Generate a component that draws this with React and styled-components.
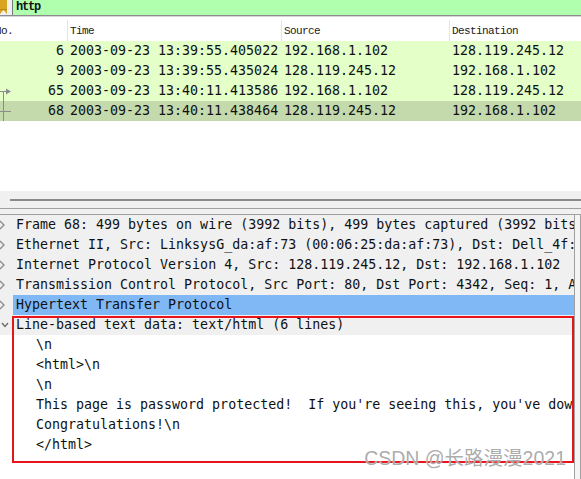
import React from 'react';
import styled, { createGlobalStyle } from 'styled-components';

const GlobalStyle = createGlobalStyle`
	html, body {
		margin: 0;
		padding: 0;
		background: #ffffff;
		overflow: hidden;
	}
	#root {
		width: 581px;
		height: 479px;
	}
`;

const MONO = `'DejaVu Sans Mono', 'Liberation Mono', monospace`;
const SMALL = `'Liberation Mono', monospace`;

const Window = styled.div`
	position: relative;
	width: 581px;
	height: 479px;
	display: flex;
	flex-direction: column;
	background: #ffffff;
	overflow: hidden;
	font-family: ${MONO};
	color: #101010;
`;

const FilterBar = styled.div`
	display: flex;
	height: 15px;
	background: #f0f0f0;
	border-bottom: 1px solid #8c8c8c;
	box-shadow: 0 1px 0 #d4d4d4;
`;

const BookmarkIcon = styled.div`
	width: 12px;
	display: flex;
	align-items: flex-start;
`;

const FilterInput = styled.div`
	flex: 1;
	background: #afffaf;
	border-left: 1px solid #7a7a7a;
	padding-left: 3px;
	font-family: ${SMALL};
	font-size: 12px;
	font-weight: bold;
	line-height: 15px;
	letter-spacing: -1.2px;
`;

const ListHeader = styled.div`
	display: grid;
	grid-template-columns: 67px 214px 168px 1fr;
	height: 21px;
	margin-top: 4px;
	background: #ffffff;
`;

const HeaderCell = styled.div`
	border-left: ${(p) => (p.$first ? 'none' : '1px solid #e4e4e4')};
	padding-left: ${(p) => (p.$first ? '0' : '2px')};
	margin-left: ${(p) => (p.$first ? '-5px' : '0')};
	font-family: ${SMALL};
	font-size: 11px;
	letter-spacing: -0.6px;
	line-height: 23px;
	color: #202020;
`;

const PacketList = styled.div`
	flex: 0 0 auto;
	height: 70px;
`;

const PacketRow = styled.div`
	display: grid;
	grid-template-columns: 67px 214px 168px 1fr;
	height: 20px;
	background: ${(p) => (p.$selected ? '#c4daac' : '#e4ffc7')};
	font-size: 13.3px;
	line-height: 20px;
	position: relative;
`;

const Cell = styled.div`
	white-space: nowrap;
	overflow: hidden;
	padding-left: ${(p) => (p.$right ? '0' : '3px')};
	padding-right: ${(p) => (p.$right ? '3px' : '0')};
	text-align: ${(p) => (p.$right ? 'right' : 'left')};
`;

const RelatedMark = styled.svg`
	position: absolute;
	left: 0;
	top: 0;
`;

const Splitter = styled.div`
	height: 17px;
	background: #f0f0f0;
	display: flex;
	flex-direction: column;
	justify-content: flex-start;
	border-bottom: 1px solid #a0a0a0;
`;

const Grip = styled.div`
	margin: 8px 0 0 10px;
	height: 2px;
	background: #8a8a8a;
`;

const Gap = styled.div`
	height: 5px;
	background: #f0f0f0;
`;

const DetailArea = styled.div`
	flex: 1;
	display: flex;
	border-top: 1px solid #a0a0a0;
`;

const DetailPane = styled.div`
	width: 574px;
	border-right: 1px solid #a0a0a0;
	display: flex;
	flex-direction: column;
	background: #ffffff;
	overflow: hidden;
`;

const SideStrip = styled.div`
	flex: 1;
	background: #f4f4f4;
	border-right: 1px solid #a0a0a0;
`;

const TreeRow = styled.div`
	display: flex;
	height: 20px;
	background: ${(p) => (p.$plain ? '#ffffff' : '#f0f0f0')};
	font-size: 13.3px;
	line-height: 20px;
	white-space: pre;
`;

const Toggle = styled.div`
	width: 13px;
	flex: 0 0 13px;
	display: flex;
	align-items: center;
`;

const TreeText = styled.div`
	flex: 1;
	padding-left: ${(p) => 3 + (p.$depth || 0) * 20}px;
	background: ${(p) => (p.$selected ? '#80b8f5' : 'transparent')};
	overflow: hidden;
`;

const Annotated = styled.div`
	position: relative;
	&::after {
		content: '';
		position: absolute;
		left: 12px;
		top: 1px;
		width: 558px;
		height: 143px;
		border: 2px solid #e8141c;
		pointer-events: none;
	}
`;

const Watermark = styled.div`
	position: absolute;
	right: 15px;
	bottom: 8px;
	font-family: 'Liberation Sans', 'Noto Sans CJK SC', sans-serif;
	font-size: 19.5px;
	color: rgba(150, 150, 150, 0.8);
	text-shadow: 0 0 1px rgba(255, 255, 255, 0.9);
	white-space: nowrap;
`;

const packets = [
	{ no: 6, time: '2003-09-23 13:39:55.405022', src: '192.168.1.102', dst: '128.119.245.12' },
	{ no: 9, time: '2003-09-23 13:39:55.435024', src: '128.119.245.12', dst: '192.168.1.102' },
	{ no: 65, time: '2003-09-23 13:40:11.413586', src: '192.168.1.102', dst: '128.119.245.12', mark: 'arrow' },
	{ no: 68, time: '2003-09-23 13:40:11.438464', src: '128.119.245.12', dst: '192.168.1.102', mark: 'end', selected: true },
];

const tree = [
	'Frame 68: 499 bytes on wire (3992 bits), 499 bytes captured (3992 bits) on interface 0',
	'Ethernet II, Src: LinksysG_da:af:73 (00:06:25:da:af:73), Dst: Dell_4f:36:23 (00:08:74:4f:36:23)',
	'Internet Protocol Version 4, Src: 128.119.245.12, Dst: 192.168.1.102',
	'Transmission Control Protocol, Src Port: 80, Dst Port: 4342, Seq: 1, Ack: 430, Len: 445',
];

const htmlLines = [
	'\\n',
	'<html>\\n',
	'\\n',
	"This page is password protected!  If you're seeing this, you've downloaded the page correctly.\\n",
	'Congratulations!\\n',
	'</html>',
];

const Chevron = ({ open }) => (
	<svg width="8" height="10" viewBox="0 0 8 10" style={{ marginLeft: open ? 1 : -2 }}>
		{open ? (
			<polyline points="1,3 4,6.5 7,3" fill="none" stroke="#6a6a6a" strokeWidth="1.3" />
		) : (
			<polyline points="2,1 6,5 2,9" fill="none" stroke="#8a8a8a" strokeWidth="1.3" />
		)}
	</svg>
);

const Mark = ({ kind }) => (
	<RelatedMark width="14" height="20" viewBox="0 0 14 20">
		{kind === 'arrow' ? (
			<>
				<line x1="3.5" y1="10" x2="3.5" y2="20" stroke="#8c8c8c" strokeWidth="1" />
				<line x1="0" y1="10.5" x2="7" y2="10.5" stroke="#8c8c8c" strokeWidth="1" />
				<polygon points="6,7.5 11,10.5 6,13.5" fill="#8c8c8c" />
			</>
		) : (
			<>
				<line x1="3.5" y1="0" x2="3.5" y2="20" stroke="#8c8c8c" strokeWidth="1" />
				<line x1="0" y1="10.5" x2="11" y2="10.5" stroke="#8c8c8c" strokeWidth="1" />
			</>
		)}
	</RelatedMark>
);

const App = () => (
	<Window>
		<GlobalStyle />
		<FilterBar>
			<BookmarkIcon>
				<svg width="8" height="15" viewBox="0 0 8 15">
					<rect x="0" y="0" width="7" height="14" fill="#d9a521" />
					<polygon points="0,14 3.5,10 7,14" fill="#f0f0f0" />
					<rect x="0" y="9" width="7" height="1" fill="#b8861a" />
				</svg>
			</BookmarkIcon>
			<FilterInput>http</FilterInput>
		</FilterBar>
		<ListHeader>
			<HeaderCell $first>No.</HeaderCell>
			<HeaderCell>Time</HeaderCell>
			<HeaderCell>Source</HeaderCell>
			<HeaderCell>Destination</HeaderCell>
		</ListHeader>
		<div>
			{packets.map((p) => (
				<PacketRow key={p.no} $selected={p.selected}>
					{p.mark && <Mark kind={p.mark} />}
					<Cell $right>{p.no}</Cell>
					<Cell>{p.time}</Cell>
					<Cell>{p.src}</Cell>
					<Cell>{p.dst}</Cell>
				</PacketRow>
			))}
		</div>
		<PacketList />
		<Splitter>
			<Grip />
		</Splitter>
		<Gap />
		<DetailArea>
			<DetailPane>
				{tree.map((t) => (
					<TreeRow key={t}>
						<Toggle>
							<Chevron />
						</Toggle>
						<TreeText>{t}</TreeText>
					</TreeRow>
				))}
				<TreeRow>
					<Toggle>
						<Chevron />
					</Toggle>
					<TreeText $selected>Hypertext Transfer Protocol</TreeText>
				</TreeRow>
				<Annotated>
					<TreeRow>
						<Toggle>
							<Chevron open />
						</Toggle>
						<TreeText>Line-based text data: text/html (6 lines)</TreeText>
					</TreeRow>
					{htmlLines.map((l, i) => (
						<TreeRow key={i} $plain>
							<Toggle />
							<TreeText $depth={1}>{l}</TreeText>
						</TreeRow>
					))}
				</Annotated>
			</DetailPane>
			<SideStrip />
		</DetailArea>
		<Watermark>CSDN @长路漫漫2021</Watermark>
	</Window>
);

export default App;
